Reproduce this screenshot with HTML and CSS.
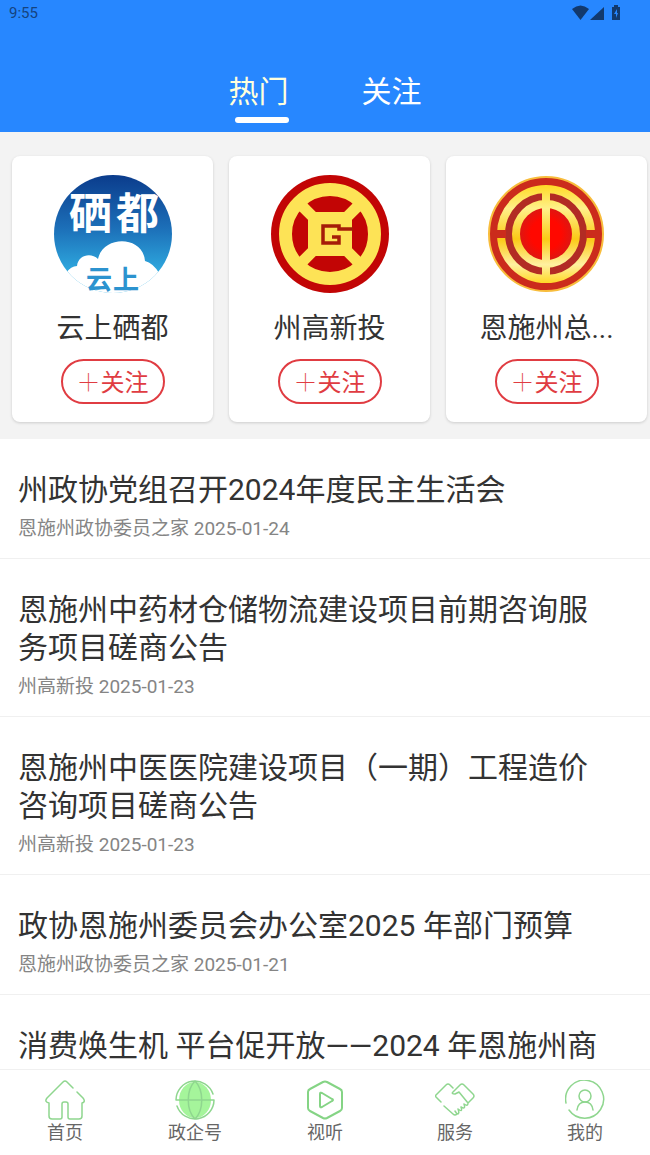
FILE: index.html
```html
<!DOCTYPE html>
<html lang="zh-CN">
<head>
  <meta charset="UTF-8">
  <meta name="viewport" content="width=device-width, initial-scale=1.0">
  <title>政企号</title>
  <link rel="stylesheet" href="styles.css">
</head>
<body>
  <header class="header">
    <div class="status-bar">
      <span>9:55</span>
      <svg class="status-icons" viewBox="0 0 50 18" aria-hidden="true">
        <path d="M0 5Q8.500-2 17 5L8.500 16Z"/>
        <path d="M18 16L32 3V16Z"/>
        <path fill-rule="evenodd" d="M42 1h4v2h2v13H40V3h2zM45 5l-3 5h2v4l2-5h-1z"/>
      </svg>
    </div>
    <nav class="tabs">
      <button class="tab active" type="button">热门</button>
      <button class="tab" type="button">关注</button>
    </nav>
  </header>

  <section class="accounts">
    <article class="account-card">
      <svg class="account-logo" viewBox="0 0 118 118" aria-hidden="true">
        <defs>
          <linearGradient id="sky" x1="0" y1="0" x2="0" y2="1">
            <stop offset="0" stop-color="#0b3c8c"/>
            <stop offset="0.45" stop-color="#1c6fb8"/>
            <stop offset="0.85" stop-color="#30aee2"/>
          </linearGradient>
          <clipPath id="round"><circle cx="59" cy="59" r="59"/></clipPath>
        </defs>
        <g clip-path="url(#round)">
          <rect width="118" height="118" fill="url(#sky)"/>
          <path fill="#fff" d="M12 98Q17 91 23 91C24 80 37 77 44 84C49 60 89 60 91 86Q99 88 105 98L118 118H0Z"/>
        </g>
        <text class="logo-title" x="15 62" y="54">硒都</text>
        <text class="logo-sub" x="32 59" y="114">云上</text>
      </svg>
      <h2 class="account-name">云上硒都</h2>
      <button class="follow-btn" type="button"><span>＋</span>关注</button>
    </article>

    <article class="account-card">
      <svg class="account-logo" viewBox="0 0 118 118" aria-hidden="true">
        <circle cx="59" cy="59" r="59" fill="#c20505"/>
        <circle cx="59" cy="59" r="44.500" fill="none" stroke="#fde356" stroke-width="13"/>
        <path d="M30 30L88 88M88 30L30 88" stroke="#fde356" stroke-width="11"/>
        <rect x="37" y="37" width="44" height="44" fill="#fde356"/>
        <path d="M82 54H68V51H52V68H68V62H61" fill="none" stroke="#a51c08" stroke-width="3.500"/>
      </svg>
      <h2 class="account-name">州高新投</h2>
      <button class="follow-btn" type="button"><span>＋</span>关注</button>
    </article>

    <article class="account-card">
      <svg class="account-logo" viewBox="0 0 118 118" aria-hidden="true">
        <defs>
          <linearGradient id="gold" gradientUnits="userSpaceOnUse" x1="0" y1="8" x2="0" y2="110">
            <stop offset="0" stop-color="#ffd91c"/>
            <stop offset="0.25" stop-color="#fff08a"/>
            <stop offset="0.55" stop-color="#fbc916"/>
            <stop offset="0.8" stop-color="#fff0a0"/>
            <stop offset="1" stop-color="#ffd51a"/>
          </linearGradient>
          <radialGradient id="core">
            <stop offset="0.5" stop-color="#ff0800"/>
            <stop offset="1" stop-color="#d21b18"/>
          </radialGradient>
        </defs>
        <circle cx="58" cy="59" r="57" fill="#cb2b1c" stroke="#f8bd3c" stroke-width="2"/>
        <circle cx="58" cy="59" r="45" fill="#b22b24" stroke="url(#gold)" stroke-width="8"/>
        <path d="M8 59H18M98 59H108" stroke="#cb2b1c" stroke-width="8"/>
        <circle cx="58" cy="59" r="30" fill="url(#core)" stroke="url(#gold)" stroke-width="8"/>
        <rect x="54" y="14" width="8" height="90" fill="url(#gold)"/>
      </svg>
      <h2 class="account-name">恩施州总...</h2>
      <button class="follow-btn" type="button"><span>＋</span>关注</button>
    </article>
  </section>

  <main class="news-list">
    <a class="news-item" href="#">
      <h3>州政协党组召开2024年度民主生活会</h3>
      <p>恩施州政协委员之家 2025-01-24</p>
    </a>
    <a class="news-item" href="#">
      <h3>恩施州中药材仓储物流建设项目前期咨询服务项目磋商公告</h3>
      <p>州高新投 2025-01-23</p>
    </a>
    <a class="news-item" href="#">
      <h3>恩施州中医医院建设项目（一期）工程造价咨询项目磋商公告</h3>
      <p>州高新投 2025-01-23</p>
    </a>
    <a class="news-item" href="#">
      <h3>政协恩施州委员会办公室2025 年部门预算</h3>
      <p>恩施州政协委员之家 2025-01-21</p>
    </a>
    <a class="news-item" href="#">
      <h3>消费焕生机 平台促开放——2024 年恩施州商</h3>
    </a>
  </main>

  <nav class="bottom-nav">
    <a href="#">
      <svg viewBox="0 0 40 40" aria-hidden="true">
        <path d="M28 8L22 2Q20 0 18 2L2 18Q-1 22 4 23V36Q4 39 7 39H15Q17 39 17 37V24Q17 22 19 22H21Q23 22 23 24V37Q23 39 25 39H34Q37 39 37 36V23Q41 22 38 18L32 12"/>
      </svg>
      <span>首页</span>
    </a>
    <a href="#">
      <svg viewBox="0 0 40 40" aria-hidden="true">
        <ellipse class="globe-fill" cx="20" cy="20" rx="16" ry="18"/>
        <path d="M39 20H1A19 19 0 0 1 38 14M39 20A19 19 0 0 1 2 26M20 1C11 10 11 30 20 39M20 1C29 10 29 30 20 39"/>
      </svg>
      <span>政企号</span>
    </a>
    <a href="#">
      <svg class="strong" viewBox="0 0 40 40" aria-hidden="true">
        <path d="M18 2Q20 1 22 2L35 9Q37 10 37 12V28Q37 30 35 31L22 38Q20 39 18 38L5 31Q3 30 3 28V12Q3 10 5 9ZM15 14V26Q15 28 17 27L27 21Q29 20 27 19L17 13Q15 12 15 14Z"/>
      </svg>
      <span>视听</span>
    </a>
    <a href="#">
      <svg viewBox="0 0 40 40" aria-hidden="true">
        <path d="M6 22L1 17Q0 16 1 15L11 5Q13 3 15 5L18 8M9 26L18 34Q20 36 22 34L20 31M22 34Q25 34 23 29Q28 33 26 27Q31 30 29 24Q33 27 33 23L24 12L20 14Q16 14 18 12L25 5Q27 3 29 5L38 14Q40 16 38 18L33 23"/>
      </svg>
      <span>服务</span>
    </a>
    <a href="#">
      <svg viewBox="0 0 40 40" aria-hidden="true">
        <path d="M1 23A19 19 0 1 1 4 30"/>
        <circle cx="20" cy="16" r="6"/>
        <path d="M12 30Q13 22 20 22Q27 22 28 30"/>
      </svg>
      <span>我的</span>
    </a>
  </nav>
</body>
</html>
```
FILE: styles.css
```css
:root {
  --blue: #2787ff;
  --red: #e03c42;
  --green: #8fd68f;
  --text: #333;
  --muted: #858585;
  --line: #f0f0f0;
}

* {
  box-sizing: border-box;
}

body {
  margin: 0;
  height: 100vh;
  display: flex;
  flex-direction: column;
  font-family: Roboto, "Noto Sans CJK SC", sans-serif;
  color: var(--text);
  background-color: #fff;
}

h2,
h3,
p {
  margin: 0;
  font-weight: 400;
}

a {
  color: inherit;
  text-decoration: none;
}

button {
  padding: 0;
  border: none;
  background: none;
  font-family: inherit;
  cursor: pointer;
}

/* Header */
.header {
  flex: none;
  background-color: var(--blue);
}

.status-bar {
  display: flex;
  align-items: center;
  justify-content: space-between;
  height: 26px;
  padding: 0 28px 0 9px;
  font-size: 15px;
  color: #15437f;
}

.status-icons {
  width: 50px;
  height: 18px;
  fill: #12396d;
}

.tabs {
  display: flex;
  justify-content: center;
  gap: 73px;
  height: 106px;
  padding-top: 46px;
}

.tab {
  display: flex;
  flex-direction: column;
  font-size: 30px;
  line-height: 40px;
  color: #fff;
}

.tab.active {
  color: #ffffdc;
}

.tab.active::after {
  content: "";
  align-self: flex-end;
  width: 54px;
  height: 6px;
  margin-top: 5px;
  border-radius: 3px;
  background-color: #fff;
}

/* Account cards */
.accounts {
  flex: none;
  display: grid;
  grid-template-columns: repeat(3, 1fr);
  gap: 16px;
  padding: 24px 3px 17px 12px;
  background-color: #f3f3f3;
}

.account-card {
  display: flex;
  flex-direction: column;
  align-items: center;
  padding: 19px 8px 18px;
  border-radius: 8px;
  background-color: #fff;
  box-shadow: 0 1px 3px rgba(0, 0, 0, 0.16);
}

.account-logo {
  width: 118px;
  height: 118px;
}

.logo-title {
  font-size: 43px;
  font-weight: 700;
  fill: #fff;
}

.logo-sub {
  font-size: 26px;
  font-weight: 700;
  fill: #2c93cf;
}

.account-name {
  margin: 16px 0 10px;
  font-size: 28px;
  line-height: 40px;
}

.follow-btn {
  width: 104px;
  height: 45px;
  padding-bottom: 2px;
  border: 2px solid var(--red);
  border-radius: 23px;
  font-size: 24px;
  color: var(--red);
}

.follow-btn span {
  font-weight: 100;
}

/* News */
.news-list {
  flex: 1;
  min-height: 0;
  overflow-y: auto;
  scrollbar-width: none;
}

.news-item {
  display: block;
  padding: 32px 35px 17px 18px;
  border-bottom: 1px solid var(--line);
}

.news-item h3 {
  font-size: 30px;
  line-height: 38px;
}

.news-item p {
  margin-top: 8px;
  font-size: 19px;
  line-height: 24px;
  color: var(--muted);
}

/* Bottom navigation */
.bottom-nav {
  flex: none;
  display: grid;
  grid-template-columns: repeat(5, 1fr);
  padding: 10px 0;
  border-top: 1px solid var(--line);
  background-color: #fff;
}

.bottom-nav a {
  display: flex;
  flex-direction: column;
  align-items: center;
  gap: 1px;
  font-size: 18px;
  line-height: 24px;
  color: #666;
}

.bottom-nav svg {
  width: 40px;
  height: 40px;
  fill: none;
  stroke: var(--green);
  stroke-width: 1.5;
  stroke-linecap: round;
  stroke-linejoin: round;
}

.bottom-nav .strong {
  stroke: #85d485;
  stroke-width: 2;
}

.bottom-nav .globe-fill {
  fill: #a5f59b;
  stroke: none;
}
```
